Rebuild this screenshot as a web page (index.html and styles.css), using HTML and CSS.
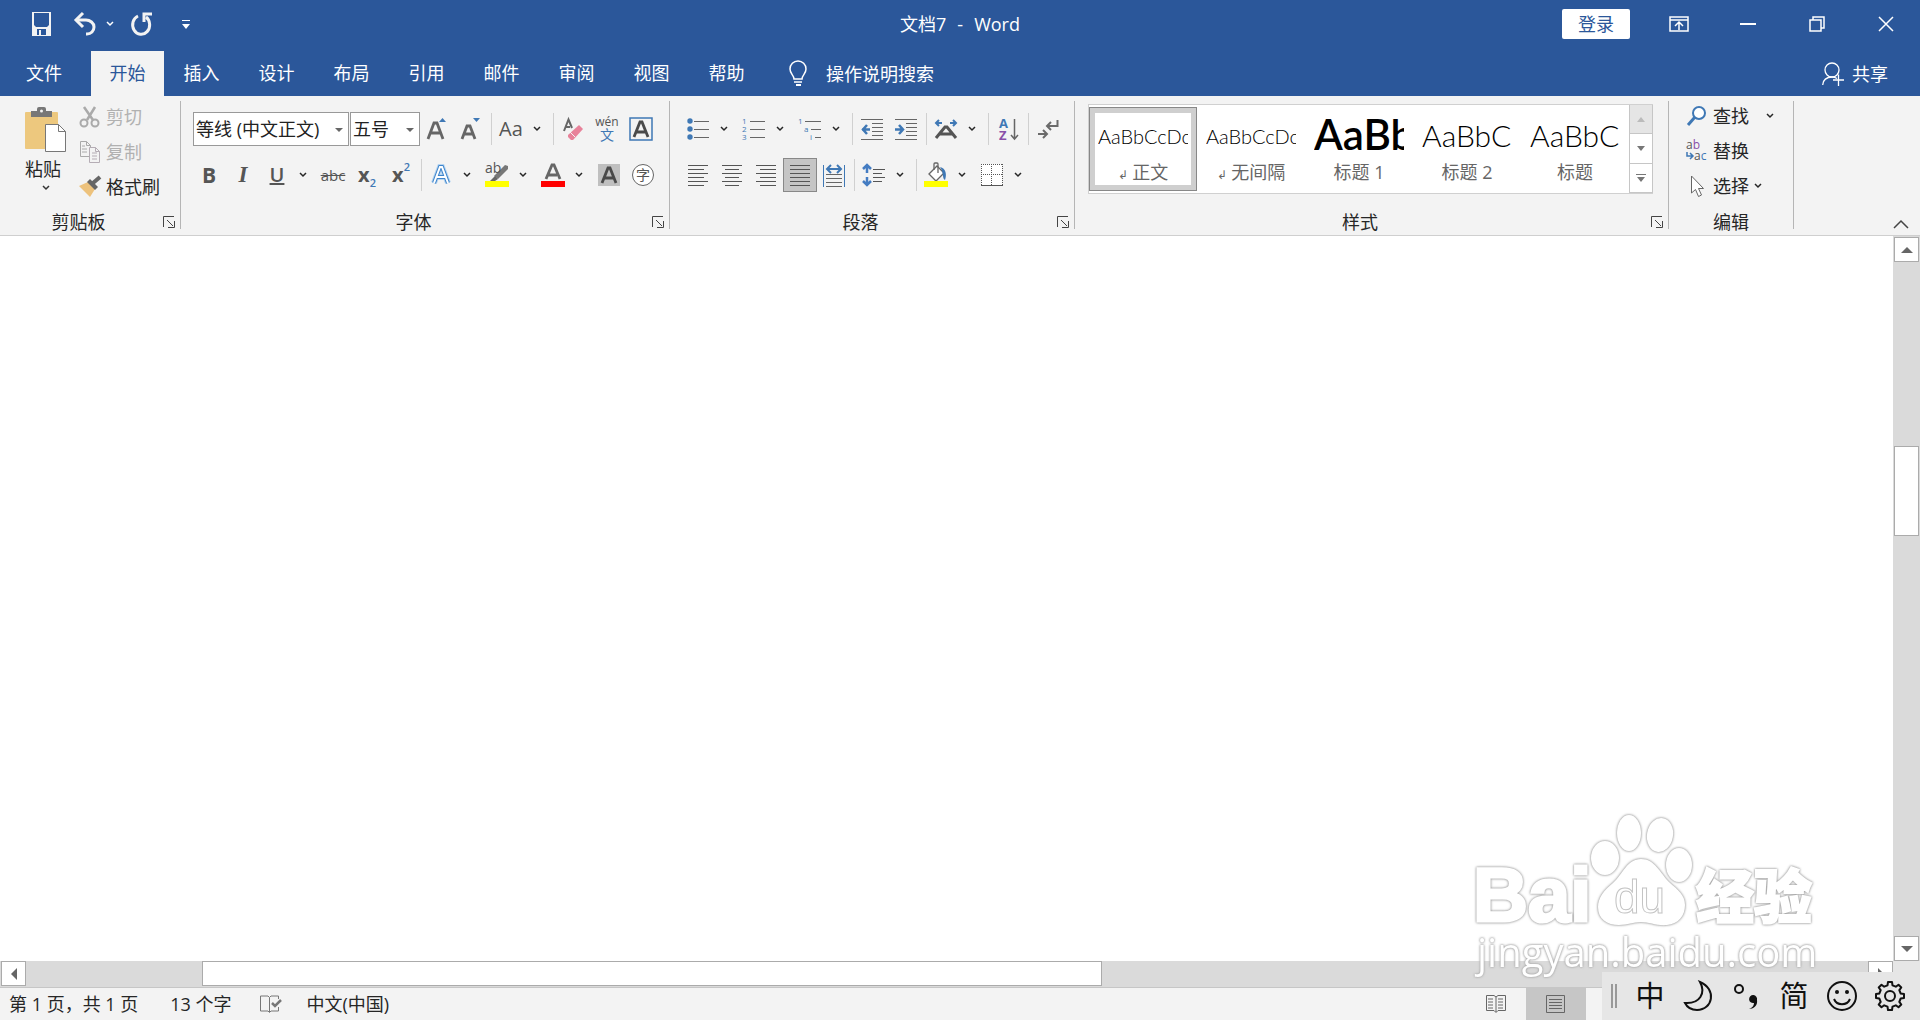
FILE: index.html
```html
<!DOCTYPE html>
<html lang="zh-CN">
<head>
    <meta charset="UTF-8">
    <meta name="viewport" content="width=device-width, initial-scale=1.0">
    <title>文档7 - Word</title>
    <link rel="stylesheet" href="styles.css">
</head>
<body>

    <svg class="defs" aria-hidden="true">
        <symbol id="chev" viewBox="0 0 8 6"><path d="M1 1l3 3 3-3" fill="none" stroke="currentColor" stroke-width="1.5"/></symbol>
        <symbol id="launch" viewBox="0 0 12 12"><path d="M.5 11V.5H11M4 4l6 6M11.500 5v6.500H5" fill="none" stroke="#444" stroke-width="1"/></symbol>
    </svg>

    <!-- Title bar -->
    <header class="titlebar">
        <div class="quick">
            <button aria-label="保存"><svg width="20" height="24" viewBox="0 0 20 24"><path d="M0 0h19v24H0z" fill="#f3f3f3"/><path d="M2 1h15v12l-2 2H4l-2-2z" fill="#2b579a"/><path d="M5 17h9v6H5z" fill="#2b579a"/><path d="M7 18h2v5H7z" fill="#f3f3f3"/></svg></button>
            <button class="undo" aria-label="撤消"><svg width="24" height="24" viewBox="0 0 24 24"><path d="M3 8h9c4 0 8 3 8 7s-3 7-7 7h-1" fill="none" stroke="#f3f3f3" stroke-width="3"/><path d="M9 1L2 8l7 7" fill="none" stroke="#f3f3f3" stroke-width="3"/></svg></button>
            <button class="more" aria-label="撤消选项"><svg width="8" height="6"><use href="#chev"/></svg></button>
            <button class="redo" aria-label="重复"><svg width="22" height="24" viewBox="0 0 22 24"><path d="M7 4a8.500 9.500 0 1 0 8 1" fill="none" stroke="#f3f3f3" stroke-width="3"/><path d="M13 10V2h8" fill="none" stroke="#f3f3f3" stroke-width="3"/></svg></button>
            <button class="customize" aria-label="自定义快速访问工具栏"><svg width="8" height="9" viewBox="0 0 8 9"><path d="M0 0h8v1H0zM0 4h8L4 9z" fill="#fff"/></svg></button>
        </div>
        <h1><span>文档7</span><span>-</span><span>Word</span></h1>
        <div class="window">
            <button class="login">登录</button>
            <button class="win" aria-label="功能区显示选项"><svg width="20" height="16" viewBox="0 0 20 16"><path d="M1 1h18v14H1zM1 4h18M10 14V7M6 10l4-4 4 4" fill="none" stroke="#fff" stroke-width="1.500"/></svg></button>
            <button class="win" aria-label="最小化"><svg width="16" height="16" viewBox="0 0 16 16"><path d="M0 8h16" stroke="#fff" stroke-width="2"/></svg></button>
            <button class="win" aria-label="向下还原"><svg width="16" height="16" viewBox="0 0 16 16"><path d="M1 4h11v11H1zM4 4V1h11v11h-3" fill="none" stroke="#fff" stroke-width="1.500"/></svg></button>
            <button class="win" aria-label="关闭"><svg width="16" height="16" viewBox="0 0 16 16"><path d="M1 1l14 14M15 1L1 15" stroke="#fff" stroke-width="1.500"/></svg></button>
        </div>
    </header>

    <!-- Tabs -->
    <nav class="tabs">
        <a class="file" href="#file">文件</a>
        <a class="active" href="#home">开始</a>
        <a href="#insert">插入</a>
        <a href="#design">设计</a>
        <a href="#layout">布局</a>
        <a href="#references">引用</a>
        <a href="#mail">邮件</a>
        <a href="#review">审阅</a>
        <a href="#view">视图</a>
        <a href="#help">帮助</a>
        <label class="tell">
            <svg width="18" height="26" viewBox="0 0 18 26"><path d="M5 18c0-4-4-5-4-10a8 8 0 0 1 16 0c0 5-4 6-4 10zM5 21h8" fill="none" stroke="#fff" stroke-width="1.500"/><path d="M7 24h5" stroke="#fff" stroke-width="2"/></svg>
            <input type="text" placeholder="操作说明搜索" aria-label="操作说明搜索">
        </label>
        <button class="share"><svg width="22" height="24" viewBox="0 0 22 24"><circle cx="10" cy="8" r="7" fill="none" stroke="#fff" stroke-width="1.300"/><path d="M.7 23c0-5 4-8 9.300-8 2 0 3.500.5 5 1.500M11 18h11M16.500 12.500V24" fill="none" stroke="#fff" stroke-width="1.300"/></svg>共享</button>
    </nav>

    <!-- Ribbon -->
    <section class="ribbon">

        <div class="group">
            <div class="clipboard">
                <button class="paste">
                    <svg width="42" height="46" viewBox="0 0 42 46"><rect y="5" width="33" height="37" rx="1" fill="#edc87e"/><path d="M6 4h6V2q0-2 2-2h5q2 0 2 2v2h6v6H6z" fill="#777"/><circle cx="16.500" cy="4" r="1.500" fill="#f3f3f3"/><path d="M20.500 17.500h13l7 7v20h-20z" fill="#fff" stroke="#777"/><path d="M33.500 17.500v7h7" fill="none" stroke="#777"/></svg>
                    <span>粘贴</span>
                    <svg width="8" height="6"><use href="#chev"/></svg>
                </button>
                <div class="stack">
                    <button class="line" disabled><svg width="22" height="22" viewBox="0 0 22 22"><path d="M5 1l9 13M16 1L8 14" fill="none" stroke="#aaa" stroke-width="2.500"/><circle cx="5" cy="17" r="3.500" fill="none" stroke="#aaa" stroke-width="2"/><circle cx="16" cy="17" r="3.500" fill="none" stroke="#aaa" stroke-width="2"/></svg>剪切</button>
                    <button class="line" disabled><svg width="22" height="22" viewBox="0 0 22 22"><path d="M1.500.5h6l4 4v11h-10z" fill="none" stroke="#aaa"/><path d="M7.500.5v4h4M3 5h3M3 8h5M3 11h5" fill="none" stroke="#aaa"/><path d="M10.500 6.500h6l4 4v11h-10z" fill="#f3f3f3" stroke="#b5adb5"/><path d="M16.500 6.500v4h4M13 12h5M13 15h5M13 18h5" fill="none" stroke="#b5adb5"/></svg>复制</button>
                    <button class="line"><svg width="22" height="22" viewBox="0 0 22 22"><path d="M0 10l9-4 7 7-5 8z" fill="#edc27c"/><path d="M8 6l3-3 8 8-3 3z" fill="#666"/><path d="M14 7l7-6" stroke="#666" stroke-width="4"/></svg>格式刷</button>
                </div>
            </div>
            <div class="caption"><span>剪贴板</span><button aria-label="剪贴板设置"><svg width="12" height="12"><use href="#launch"/></svg></button></div>
        </div>

        <div class="group">
            <div class="rows">
                <div class="row">
                    <div class="combo name"><select aria-label="字体"><option>等线 (中文正文)</option></select></div>
                    <div class="combo size"><select aria-label="字号"><option>五号</option></select></div>
                    <button class="tool" aria-label="增大字号"><svg width="24" height="26" viewBox="0 0 24 26"><path d="M3 23l6-16h3l6 16M6 17h9" fill="none" stroke="#666" stroke-width="2.800"/><path d="M14 6l3.500-4L21 6z" fill="#3f78b5"/></svg></button>
                    <button class="tool" aria-label="减小字号"><svg width="24" height="26" viewBox="0 0 24 26"><path d="M3 23l5-13h3l5 13M5 18h9" fill="none" stroke="#666" stroke-width="2.800"/><path d="M14 2l3.500 4L21 2z" fill="#3f78b5"/></svg></button>
                    <i class="sep"></i>
                    <button class="tool case">Aa</button>
                    <button class="chev" aria-label="更改大小写选项"><svg width="8" height="6"><use href="#chev"/></svg></button>
                    <i class="sep"></i>
                    <button class="tool" aria-label="清除所有格式"><svg width="22" height="24" viewBox="0 0 22 24"><path d="M2 14L6.500 2.500 10 11M3 10h5" fill="none" stroke="#666" stroke-width="2"/><path d="M6 18L17 8l4 4-10 11H9l-3-3z" fill="#e8829a"/><path d="M8 15l5 5" stroke="#f3f3f3"/></svg></button>
                    <button class="tool pinyin"><span>wén</span><span>文</span></button>
                    <button class="tool" aria-label="字符边框"><svg width="24" height="24" viewBox="0 0 24 24"><path d="M1 1h22v22H1z" fill="none" stroke="#3f78b5" stroke-width="1.500"/><path d="M5 20l6-15h2l6 15M7 15h10" fill="none" stroke="#4a4a4a" stroke-width="2.800"/></svg></button>
                </div>
                <div class="row">
                    <button class="tool bold">B</button>
                    <button class="tool italic">I</button>
                    <button class="tool underline">U</button>
                    <button class="chev" aria-label="下划线选项"><svg width="8" height="6"><use href="#chev"/></svg></button>
                    <button class="tool strike">abc</button>
                    <button class="tool script">x<sub>2</sub></button>
                    <button class="tool script">x<sup>2</sup></button>
                    <i class="sep"></i>
                    <button class="tool" aria-label="文本效果"><svg width="22" height="24" viewBox="0 0 22 24"><path d="M4 20l6-16h2l6 16M7 14h8" fill="none" stroke="#b5d4f0" stroke-width="6"/><path d="M4 20l6-16h2l6 16M7 14h8" fill="none" stroke="#3f85cc" stroke-width="4"/><path d="M4 20l6-16h2l6 16M7 14h8" fill="none" stroke="#fff" stroke-width="2"/></svg></button>
                    <button class="chev" aria-label="文本效果选项"><svg width="8" height="6"><use href="#chev"/></svg></button>
                    <button class="tool mark" aria-label="突出显示"><span>ab</span><svg width="24" height="24" viewBox="0 0 24 24"><path d="M9 13L20 2l3 1v3L13 16z" fill="#777"/><path d="M10 13l-5 5h5l3-2z" fill="#666"/><path d="M0 18h24v6H0z" fill="#ff0"/></svg></button>
                    <button class="chev" aria-label="突出显示颜色"><svg width="8" height="6"><use href="#chev"/></svg></button>
                    <button class="tool" aria-label="字体颜色"><svg width="24" height="24" viewBox="0 0 24 24"><path d="M5 16L11 2h2l6 14M7 12h9" fill="none" stroke="#666" stroke-width="2.800"/><path d="M0 18h24v6H0z" fill="red"/></svg></button>
                    <button class="chev" aria-label="字体颜色选项"><svg width="8" height="6"><use href="#chev"/></svg></button>
                    <button class="tool" aria-label="字符底纹"><svg width="22" height="22" viewBox="0 0 22 22"><path d="M0 0h22v22H0z" fill="#bfbfbf"/><path d="M4 19l6-15h2l6 15M6 14h10" fill="none" stroke="#4a4a4a" stroke-width="2.800"/></svg></button>
                    <button class="tool circled"><span>字</span></button>
                </div>
            </div>
            <div class="caption"><span>字体</span><button aria-label="字体设置"><svg width="12" height="12"><use href="#launch"/></svg></button></div>
        </div>

        <div class="group">
            <div class="rows">
                <div class="row">
                    <button class="tool" aria-label="项目符号"><svg width="24" height="24" viewBox="0 0 24 24"><g fill="#3f78b5"><circle cx="4" cy="4" r="2.700"/><circle cx="4" cy="12" r="2.700"/><circle cx="4" cy="20" r="2.700"/></g><path d="M8 4.500h15M8 12.500h15M8 20.500h15" stroke="#666"/></svg></button>
                    <button class="chev" aria-label="项目符号选项"><svg width="8" height="6"><use href="#chev"/></svg></button>
                    <button class="tool" aria-label="编号"><svg class="nums" width="24" height="24" viewBox="0 0 24 24"><text x="0" y="7">1</text><text x="0" y="15">2</text><text x="0" y="23">3</text><path d="M8 4.500h15M8 12.500h15M8 20.500h15" stroke="#666"/></svg></button>
                    <button class="chev" aria-label="编号选项"><svg width="8" height="6"><use href="#chev"/></svg></button>
                    <button class="tool" aria-label="多级列表"><svg class="nums" width="24" height="24" viewBox="0 0 24 24"><text x="0" y="7">1</text><text x="6" y="15">a</text><text x="12" y="23">i</text><path d="M7 4.500h16M13 12.500h10M17 20.500h6" stroke="#666"/></svg></button>
                    <button class="chev" aria-label="多级列表选项"><svg width="8" height="6"><use href="#chev"/></svg></button>
                    <i class="sep"></i>
                    <button class="tool" aria-label="减少缩进量"><svg width="24" height="24" viewBox="0 0 24 24"><path d="M1 2.500h22M12 6.500h11M12 10.500h11M12 14.500h11M12 18.500h11M1 22.500h22" stroke="#666"/><path d="M10 12.500H2M7 8l-4 4.500L7 17" fill="none" stroke="#3f78b5" stroke-width="2.500"/></svg></button>
                    <button class="tool" aria-label="增加缩进量"><svg width="24" height="24" viewBox="0 0 24 24"><path d="M1 2.500h22M12 6.500h11M12 10.500h11M12 14.500h11M12 18.500h11M1 22.500h22" stroke="#666"/><path d="M1 12.500h8M5 8l4 4.500L5 17" fill="none" stroke="#3f78b5" stroke-width="2.500"/></svg></button>
                    <i class="sep"></i>
                    <button class="tool" aria-label="中文版式"><svg width="24" height="24" viewBox="0 0 24 24"><path d="M2 21L11 10h2l9 11M6 17h12" fill="none" stroke="#555" stroke-width="3"/><path d="M8 6H2M5 3L2 6l3 3M16 6h6M19 3l3 3-3 3" fill="none" stroke="#3f78b5" stroke-width="2"/></svg></button>
                    <button class="chev" aria-label="中文版式选项"><svg width="8" height="6"><use href="#chev"/></svg></button>
                    <i class="sep"></i>
                    <button class="tool" aria-label="排序"><svg class="sort" width="22" height="26" viewBox="0 0 22 26"><text x="2" y="12" fill="#3f78b5">A</text><text x="2" y="24" fill="#8950a8">Z</text><path d="M17.500 3v19M14 19l3.500 4 3.500-4" fill="none" stroke="#666" stroke-width="1.500"/></svg></button>
                    <i class="sep"></i>
                    <button class="tool" aria-label="显示编辑标记"><svg width="22" height="22" viewBox="0 0 22 22"><path d="M20.500 2v6H11M14 4l-4 4 4 4M1 16h9M6 12l4 4-4 4" fill="none" stroke="#6a6a6a" stroke-width="2"/></svg></button>
                </div>
                <div class="row">
                    <button class="tool" aria-label="左对齐"><svg width="22" height="24" viewBox="0 0 22 24"><path d="M1 2.500h20M1 6.500h16M1 10.500h20M1 14.500h16M1 18.500h20M1 22.500h16" stroke="#555"/></svg></button>
                    <button class="tool" aria-label="居中"><svg width="22" height="24" viewBox="0 0 22 24"><path d="M1 2.500h20M4 6.500h14M1 10.500h20M4 14.500h14M1 18.500h20M4 22.500h14" stroke="#555"/></svg></button>
                    <button class="tool" aria-label="右对齐"><svg width="22" height="24" viewBox="0 0 22 24"><path d="M1 2.500h20M5 6.500h16M1 10.500h20M5 14.500h16M1 18.500h20M5 22.500h16" stroke="#555"/></svg></button>
                    <button class="tool pressed" aria-label="两端对齐"><svg width="22" height="24" viewBox="0 0 22 24"><path d="M1 2.500h20M1 6.500h20M1 10.500h20M1 14.500h20M1 18.500h20M1 22.500h20" stroke="#555"/></svg></button>
                    <button class="tool" aria-label="分散对齐"><svg width="22" height="24" viewBox="0 0 22 24"><path d="M3 11.500h16M3 15.500h16M3 19.500h16M3 23.500h16" stroke="#666"/><path d="M.5 2v22M21.500 2v22" stroke="#3f78b5"/><path d="M4 6h14M8 2L4 6l4 4M14 2l4 4-4 4" fill="none" stroke="#3f78b5" stroke-width="2"/></svg></button>
                    <i class="sep"></i>
                    <button class="tool" aria-label="行和段落间距"><svg width="24" height="24" viewBox="0 0 24 24"><path d="M5 2v8M1 6l4-4 4 4M5 14v8M1 18l4 4 4-4" fill="none" stroke="#447cc2" stroke-width="2.500"/><path d="M11 6.500h12M11 10.500h9M11 14.500h12M11 18.500h9" stroke="#555"/></svg></button>
                    <button class="chev" aria-label="间距选项"><svg width="8" height="6"><use href="#chev"/></svg></button>
                    <i class="sep"></i>
                    <button class="tool" aria-label="底纹"><svg width="24" height="26" viewBox="0 0 24 26"><path d="M5 12l8-8 7 7-8 8z" fill="#fff" stroke="#666" stroke-width="1.300"/><path d="M10 8V2q0-1 1-1h2q1 0 1 1v9" fill="none" stroke="#666" stroke-width="1.300"/><path d="M16 5c6 1 7 8 5 13-3-1-1-8-5-13z" fill="#3f78b5"/><path d="M0 19h24v6H0z" fill="#ff0"/></svg></button>
                    <button class="chev" aria-label="底纹选项"><svg width="8" height="6"><use href="#chev"/></svg></button>
                    <button class="tool" aria-label="边框"><svg width="22" height="22" viewBox="0 0 22 22"><path d="M0 0h21v21H0z" fill="#fff"/><path d="M0 .5h22M.5 0v21M21.500 0v21M10.500 0v21M0 10.500h22" fill="none" stroke="#555" stroke-dasharray="1 1"/><path d="M0 21.500h22" stroke="#555"/></svg></button>
                    <button class="chev" aria-label="边框选项"><svg width="8" height="6"><use href="#chev"/></svg></button>
                </div>
            </div>
            <div class="caption"><span>段落</span><button aria-label="段落设置"><svg width="12" height="12"><use href="#launch"/></svg></button></div>
        </div>

        <div class="group styles">
            <div class="gallery">
                <button class="style selected"><b>AaBbCcDc</b><span><small>↲</small> 正文</span></button>
                <button class="style"><b>AaBbCcDc</b><span><small>↲</small> 无间隔</span></button>
                <button class="style h1"><b>AaBb</b><span>标题 1</span></button>
                <button class="style h2"><b>AaBbC</b><span>标题 2</span></button>
                <button class="style h2"><b>AaBbC</b><span>标题</span></button>
                <div class="pager">
                    <button disabled aria-label="上一行"><svg width="8" height="5" viewBox="0 0 8 5"><path d="M0 5h8L4 0z" fill="#bbb"/></svg></button>
                    <button aria-label="下一行"><svg width="8" height="5" viewBox="0 0 8 5"><path d="M0 0h8L4 5z" fill="#777"/></svg></button>
                    <button aria-label="其他"><svg width="10" height="8" viewBox="0 0 10 8"><path d="M0 0h10v1H0zM1 3h8L5 8z" fill="#777"/></svg></button>
                </div>
            </div>
            <div class="caption"><span>样式</span><button aria-label="样式设置"><svg width="12" height="12"><use href="#launch"/></svg></button></div>
        </div>

        <div class="group editing">
            <div class="stack">
                <button class="line"><svg width="22" height="22" viewBox="0 0 22 22"><circle cx="13" cy="8" r="6" fill="#fff" stroke="#3f78b5" stroke-width="2"/><path d="M9 12l-7 8" stroke="#3f78b5" stroke-width="3"/></svg>查找<svg class="far" width="8" height="6"><use href="#chev"/></svg></button>
                <button class="line"><svg class="swap" width="22" height="24" viewBox="0 0 22 24"><text x="0" y="10">a<tspan fill="#8950a8">b</tspan></text><text x="8" y="21">a<tspan fill="#3f78b5">c</tspan></text><path d="M1 13v4h5M4 14l3 3-3 3" fill="none" stroke="#3f78b5" stroke-width="1.500"/></svg>替换</button>
                <button class="line"><svg width="22" height="24" viewBox="0 0 22 24"><path d="M5.500 2v17l4-3.500 3 7 3-1.500-3-6.500h5z" fill="#fff" stroke="#666"/></svg>选择<svg width="8" height="6"><use href="#chev"/></svg></button>
            </div>
            <div class="caption"><span>编辑</span></div>
        </div>

        <button class="collapse" aria-label="折叠功能区"><svg width="16" height="10" viewBox="0 0 16 10"><path d="M1 9l7-7 7 7" fill="none" stroke="#444" stroke-width="1.500"/></svg></button>
    </section>

    <!-- Document -->
    <main class="work">
        <div class="page"></div>
        <div class="vscroll">
            <button aria-label="向上滚动"><svg width="12" height="6" viewBox="0 0 12 6"><path d="M0 6h12L6 0z" fill="#666"/></svg></button>
            <div class="track"><div class="thumb"></div></div>
            <button aria-label="向下滚动"><svg width="12" height="6" viewBox="0 0 12 6"><path d="M0 0h12L6 6z" fill="#666"/></svg></button>
        </div>
        <div class="hscroll">
            <button aria-label="向左滚动"><svg width="6" height="12" viewBox="0 0 6 12"><path d="M6 0v12L0 6z" fill="#666"/></svg></button>
            <div class="track"><div class="thumb"></div></div>
            <button aria-label="向右滚动"><svg width="6" height="12" viewBox="0 0 6 12"><path d="M0 0v12l6-6z" fill="#666"/></svg></button>
        </div>
    </main>

    <!-- Status bar -->
    <footer class="status">
        <span class="pages">第 1 页，共 1 页</span>
        <span class="words">13 个字</span>
        <svg class="proof" width="22" height="18" viewBox="0 0 22 18"><path d="M9.500 2.500V17M9.500 2.500L8 1H.5v15H8l1.500 1.500L11 16h7.500v-4M18.500 4V1H11L9.500 2.500" fill="none" stroke="#777"/><path d="M12 8l3 3 6-6" fill="none" stroke="#777" stroke-width="2.500"/></svg>
        <span>中文(中国)</span>
        <button class="view first" aria-label="阅读视图"><svg width="20" height="18" viewBox="0 0 20 18"><path d="M10 2L8 .5H.5v15H8l2 2 2-2h7.500V.5H12z" fill="none" stroke="#666"/><path d="M10 2v15M2 4h5M2 7h5M2 10h5M2 13h5M12 4h5M12 7h5M12 10h5M12 13h5" stroke="#666"/></svg></button>
        <button class="view on" aria-label="页面视图"><svg width="20" height="18" viewBox="0 0 20 18"><path d="M.5.5h18v17H.5z" fill="none" stroke="#666"/><path d="M3 4.500h13M3 7.500h13M3 10.500h13M3 13.500h13" stroke="#666"/></svg></button>
    </footer>

    <!-- Watermark -->
    <svg class="watermark" width="360" height="180" viewBox="0 0 360 180" role="img" aria-label="Baidu经验 jingyan.baidu.com">
        <text class="bai" x="6" y="114">Bai</text>
        <g>
            <ellipse cx="138" cy="51" rx="14" ry="17"/>
            <ellipse cx="162" cy="26" rx="12" ry="18"/>
            <ellipse cx="193" cy="28" rx="13" ry="17" transform="rotate(10 193 28)"/>
            <ellipse cx="212" cy="58" rx="13" ry="17"/>
            <path d="M174 52c-14 0-18 15-28 24-9 7-15 15-15 24 0 12 9 18 21 18 9 0 14-3 22-3s16 4 26 3c11-1 18-9 18-20 0-10-7-15-16-23-9-9-14-23-28-23z"/>
        </g>
        <text class="du" x="147" y="106">du</text>
        <text class="jingyan" x="229" y="111">经验</text>
        <text class="url" x="10" y="160">jingyan.baidu.com</text>
    </svg>

    <!-- Input method bar -->
    <aside class="ime">
        <i class="grip"></i>
        <button>中</button>
        <button aria-label="半角"><svg width="30" height="32" viewBox="0 0 30 32"><path d="M17 2c17 7 13 28-3 28-6 0-10-3-12-7 15 1 21-10 15-21z" fill="none" stroke="#111" stroke-width="2"/></svg></button>
        <button aria-label="中文标点"><svg width="26" height="32" viewBox="0 0 26 32"><circle cx="6" cy="9" r="4" fill="none" stroke="#111" stroke-width="2"/><path d="M16 29c3-1 5-3 5-6a4 4 0 1 1 3-3c1 6-4 9-8 9z" fill="#111"/></svg></button>
        <button>简</button>
        <button aria-label="表情"><svg width="32" height="32" viewBox="0 0 32 32"><circle cx="16" cy="16" r="14" fill="none" stroke="#111" stroke-width="2"/><circle cx="11" cy="12" r="2" fill="#111"/><circle cx="21" cy="12" r="2" fill="#111"/><path d="M8 19c3 7 13 7 16 0" fill="none" stroke="#111" stroke-width="2"/></svg></button>
        <button aria-label="设置"><svg width="32" height="32" viewBox="0 0 32 32"><path d="M13.500 5.300L14 2h4l.5 3.300 3.300 1.400 2.700-2 2.800 2.800-2 2.700 1.400 3.300 3.300.5v4l-3.300.5-1.400 3.300 2 2.700-2.800 2.800-2.700-2-3.300 1.400L18 30h-4l-.5-3.300-3.300-1.400-2.700 2-2.800-2.800 2-2.700-1.400-3.300L2 18v-4l3.300-.5 1.400-3.300-2-2.700 2.800-2.800 2.700 2z" fill="none" stroke="#111" stroke-width="2" stroke-linejoin="round"/><circle cx="16" cy="16" r="5" fill="none" stroke="#111" stroke-width="2"/></svg></button>
    </aside>

</body>
</html>
```
FILE: styles.css
```css
* {
    margin: 0;
    padding: 0;
    box-sizing: border-box;
}

body {
    font-family: "Open Sans", "Noto Sans CJK SC", sans-serif;
    font-size: 18px;
    line-height: 24px;
    color: #262626;
    background: #fff;
    height: 100vh;
    display: flex;
    flex-direction: column;
    overflow: hidden;
    position: relative;
}

button {
    font: inherit;
    color: inherit;
    background: none;
    border: none;
    display: flex;
    align-items: center;
    justify-content: center;
    white-space: nowrap;
}

svg {
    flex: none;
    display: block;
    overflow: visible;
}

.defs {
    position: absolute;
    width: 0;
    height: 0;
}

/* Title bar */
.titlebar {
    display: grid;
    grid-template-columns: 1fr auto 1fr;
    align-items: center;
    height: 51px;
    padding-bottom: 4px;
    background: #2b579a;
    color: #fff;
}

.titlebar h1 {
    display: flex;
    gap: 11px;
    font-size: 18px;
    font-weight: 400;
}

.quick {
    display: flex;
    align-items: flex-start;
    gap: 20px;
    padding: 12px 0 0 32px;
    height: 47px;
}

.quick button {
    height: 24px;
}

.quick .undo {
    padding-left: 2px;
}

.quick .more {
    margin-left: -12px;
}

.quick .redo {
    margin-left: -3px;
}

.quick .customize {
    margin-left: 9px;
}

.window {
    display: flex;
    align-items: center;
    justify-content: flex-end;
}

.login {
    width: 68px;
    height: 30px;
    margin-right: 14px;
    background: #fff;
    color: #2b579a;
    border-radius: 2px;
}

.win {
    width: 69px;
    height: 46px;
}

/* Tabs */
.tabs {
    display: flex;
    height: 45px;
    background: #2b579a;
}

.tabs a {
    width: 75px;
    line-height: 44px;
    text-align: center;
    color: #fff;
    text-decoration: none;
}

.tabs .file {
    width: 91px;
    padding-right: 3px;
}

.tabs .active {
    width: 73px;
    background: #f3f3f3;
    color: #2b579a;
}

.tell {
    display: flex;
    align-items: center;
    gap: 19px;
    margin-left: 25px;
}

.tell input {
    width: 200px;
    background: none;
    border: none;
    font: inherit;
    color: #fff;
}

.tell input::placeholder {
    color: #fff;
    opacity: 1;
}

.share {
    gap: 8px;
    margin-left: auto;
    margin-right: 32px;
    color: #fff;
}

/* Ribbon */
.ribbon {
    display: flex;
    height: 140px;
    padding: 5px 0 6px;
    background: #f3f3f3;
    border-bottom: 1px solid #cfcfcf;
}

.group {
    display: flex;
    flex-direction: column;
    justify-content: space-between;
    border-right: 1px solid #b5b5b5;
}

.caption {
    display: flex;
    align-items: center;
    height: 14px;
    padding-right: 5px;
}

.caption span {
    flex: 1;
    text-align: center;
}

.caption button {
    width: 18px;
    justify-content: flex-end;
}

.clipboard {
    display: flex;
    gap: 12px;
    padding: 4px 20px 0 25px;
}

.paste {
    flex-direction: column;
    justify-content: flex-start;
    gap: 4px;
    padding-top: 2px;
}

.paste span {
    margin-right: 6px;
}

.paste use {
    color: #333;
}

.stack {
    display: flex;
    flex-direction: column;
    gap: 11px;
}

.line {
    height: 24px;
    gap: 5px;
    justify-content: flex-start;
}

.line:disabled {
    color: #b1b1b1;
}

.rows {
    display: flex;
    flex-direction: column;
    gap: 12px;
    padding: 11px 9px 0 11px;
}

.row {
    display: flex;
    align-items: center;
    height: 34px;
}

.tool {
    width: 34px;
    height: 34px;
    color: #555;
}

.chev {
    width: 22px;
    height: 34px;
    padding-right: 4px;
}

.sep {
    width: 1px;
    height: 32px;
    margin: 0 2px 0 3px;
    background: #d0d0d0;
}

.combo {
    position: relative;
    height: 34px;
    margin-left: 1px;
}

.combo.name {
    width: 156px;
}

.combo.size {
    width: 70px;
}

.combo select {
    appearance: none;
    width: 100%;
    height: 100%;
    padding-left: 2px;
    border: 1px solid #999;
    border-radius: 0;
    background: #fff;
    font: inherit;
    color: #222;
}

.combo::after {
    content: "";
    position: absolute;
    right: 6px;
    top: 16px;
    border: 4px solid transparent;
    border-top-color: #666;
}

.case {
    font-size: 20px;
}

.pinyin {
    flex-direction: column;
    font-size: 12px;
    line-height: 12px;
}

.pinyin span + span {
    color: #3f78b5;
    font-size: 14px;
    line-height: 14px;
}

.bold {
    font-size: 21px;
    font-weight: 700;
}

.italic {
    font-family: "Liberation Serif", serif;
    font-size: 23px;
    font-style: italic;
    font-weight: 700;
}

.underline {
    font-size: 20px;
    font-weight: 600;
    text-decoration: underline;
}

.strike {
    font-size: 15px;
    text-decoration: line-through;
}

.script {
    font-size: 20px;
    font-weight: 700;
}

.script sub,
.script sup {
    font-size: 11px;
    font-weight: 600;
    line-height: 10px;
    color: #3f78b5;
}

.script sub {
    align-self: flex-end;
    padding-bottom: 4px;
}

.script sup {
    align-self: flex-start;
    padding-top: 4px;
}

.mark {
    position: relative;
}

.mark span {
    position: absolute;
    left: 5px;
    top: 3px;
    font-size: 14px;
    line-height: 14px;
}

.circled span {
    width: 22px;
    height: 22px;
    border: 1px solid #666;
    border-radius: 50%;
    background: #fff;
    font-size: 14px;
    line-height: 19px;
}

.nums text {
    font-size: 8px;
    fill: #3f78b5;
}

.sort text {
    font-size: 13px;
    font-weight: 700;
}

.swap text {
    font-size: 12px;
    fill: #555;
}

.pressed {
    background: #c5c5c5;
    border: 1px solid #888;
}

/* Style gallery */
.gallery {
    display: flex;
    height: 90px;
    margin: 3px 15px 0 13px;
    background: #fff;
    border: 1px solid #d0d0d0;
    border-right: none;
}

.style {
    width: 108px;
    height: 84px;
    margin-top: 2px;
    padding: 6px 8px 0;
    border: 1px solid transparent;
    flex-direction: column;
    justify-content: flex-start;
    color: #666;
}

.style.selected {
    border-color: #888;
    box-shadow: inset 0 0 0 5px #cfcfcf;
}

.style b {
    width: 90px;
    height: 46px;
    overflow: hidden;
    font-family: Lato, sans-serif;
    font-size: 20px;
    font-weight: 300;
    line-height: 44px;
    color: #000;
    text-align: left;
}

.style.h1 b {
    font-size: 42px;
    font-weight: 600;
    line-height: 40px;
}

.style.h2 b {
    font-size: 30px;
    line-height: 42px;
}

.style small {
    font-size: 12px;
}

.pager {
    display: flex;
    flex-direction: column;
    width: 24px;
}

.pager button {
    flex: 1;
    border: 1px solid #c6c6c6;
    border-top: none;
}

.pager button:disabled {
    background: #e5e5e5;
}

/* Editing */
.editing .stack {
    padding: 3px 19px 0 17px;
}

.editing .far {
    margin-left: 12px;
}

.editing .caption {
    padding-right: 0;
}

.collapse {
    margin-left: auto;
    margin-right: 11px;
    align-self: flex-end;
}

/* Document area */
.work {
    flex: 1;
    display: grid;
    grid-template-columns: 1fr 27px;
    grid-template-rows: 1fr 26px;
    background: #e6e6e6;
    min-height: 0;
}

.page {
    background: #fff;
}

.vscroll,
.hscroll {
    display: flex;
    background: #dadada;
}

.vscroll {
    flex-direction: column;
    padding: 1px 1px 0;
}

.hscroll {
    padding: 0 0 1px 1px;
}

.vscroll button,
.hscroll button {
    width: 25px;
    height: 25px;
    background: #fff;
    border: 1px solid #ababab;
}

.track {
    flex: 1;
    display: flex;
}

.vscroll .track {
    flex-direction: column;
    padding-top: 184px;
}

.hscroll .track {
    padding-left: 176px;
}

.thumb {
    background: #fff;
    border: 1px solid #ababab;
}

.vscroll .thumb {
    height: 90px;
}

.hscroll .thumb {
    width: 54%;
}

/* Status bar */
.status {
    display: flex;
    align-items: center;
    height: 33px;
    padding-left: 9px;
    background: #f3f3f3;
    border-top: 1px solid #c6c6c6;
}

.pages {
    margin-right: 32px;
}

.words {
    margin-right: 28px;
}

.proof {
    margin-right: 25px;
}

.view {
    width: 60px;
    height: 32px;
}

.view.first {
    margin-left: auto;
}

.view.on {
    margin-right: 334px;
    background: #c6c6c6;
}

/* Watermark over the page corner */
.watermark {
    position: absolute;
    right: 93px;
    bottom: 33px;
    fill: #fff;
    filter: drop-shadow(0 0 1px #999) drop-shadow(0 0 1px #ccc);
}

.bai {
    font-family: "Liberation Sans", sans-serif;
    font-size: 76px;
    font-weight: 700;
    stroke: #fff;
    stroke-width: 3px;
}

.du {
    font-family: "Liberation Sans", sans-serif;
    font-size: 46px;
    stroke: #c4c4c4;
}

.jingyan {
    font-family: "Noto Sans CJK SC", sans-serif;
    font-size: 58px;
    font-weight: 900;
    stroke: #fff;
    stroke-width: 2px;
}

.url {
    font-size: 40px;
}

/* Input method bar */
.ime {
    position: absolute;
    right: 0;
    bottom: 0;
    display: flex;
    align-items: center;
    height: 48px;
    padding: 0 6px 0 9px;
    background: #e6e6e6;
}

.ime button {
    width: 48px;
    height: 48px;
    color: #111;
    font-size: 29px;
}

.grip {
    width: 6px;
    height: 24px;
    margin-right: 9px;
    border: solid #999;
    border-width: 0 2px;
}
```
